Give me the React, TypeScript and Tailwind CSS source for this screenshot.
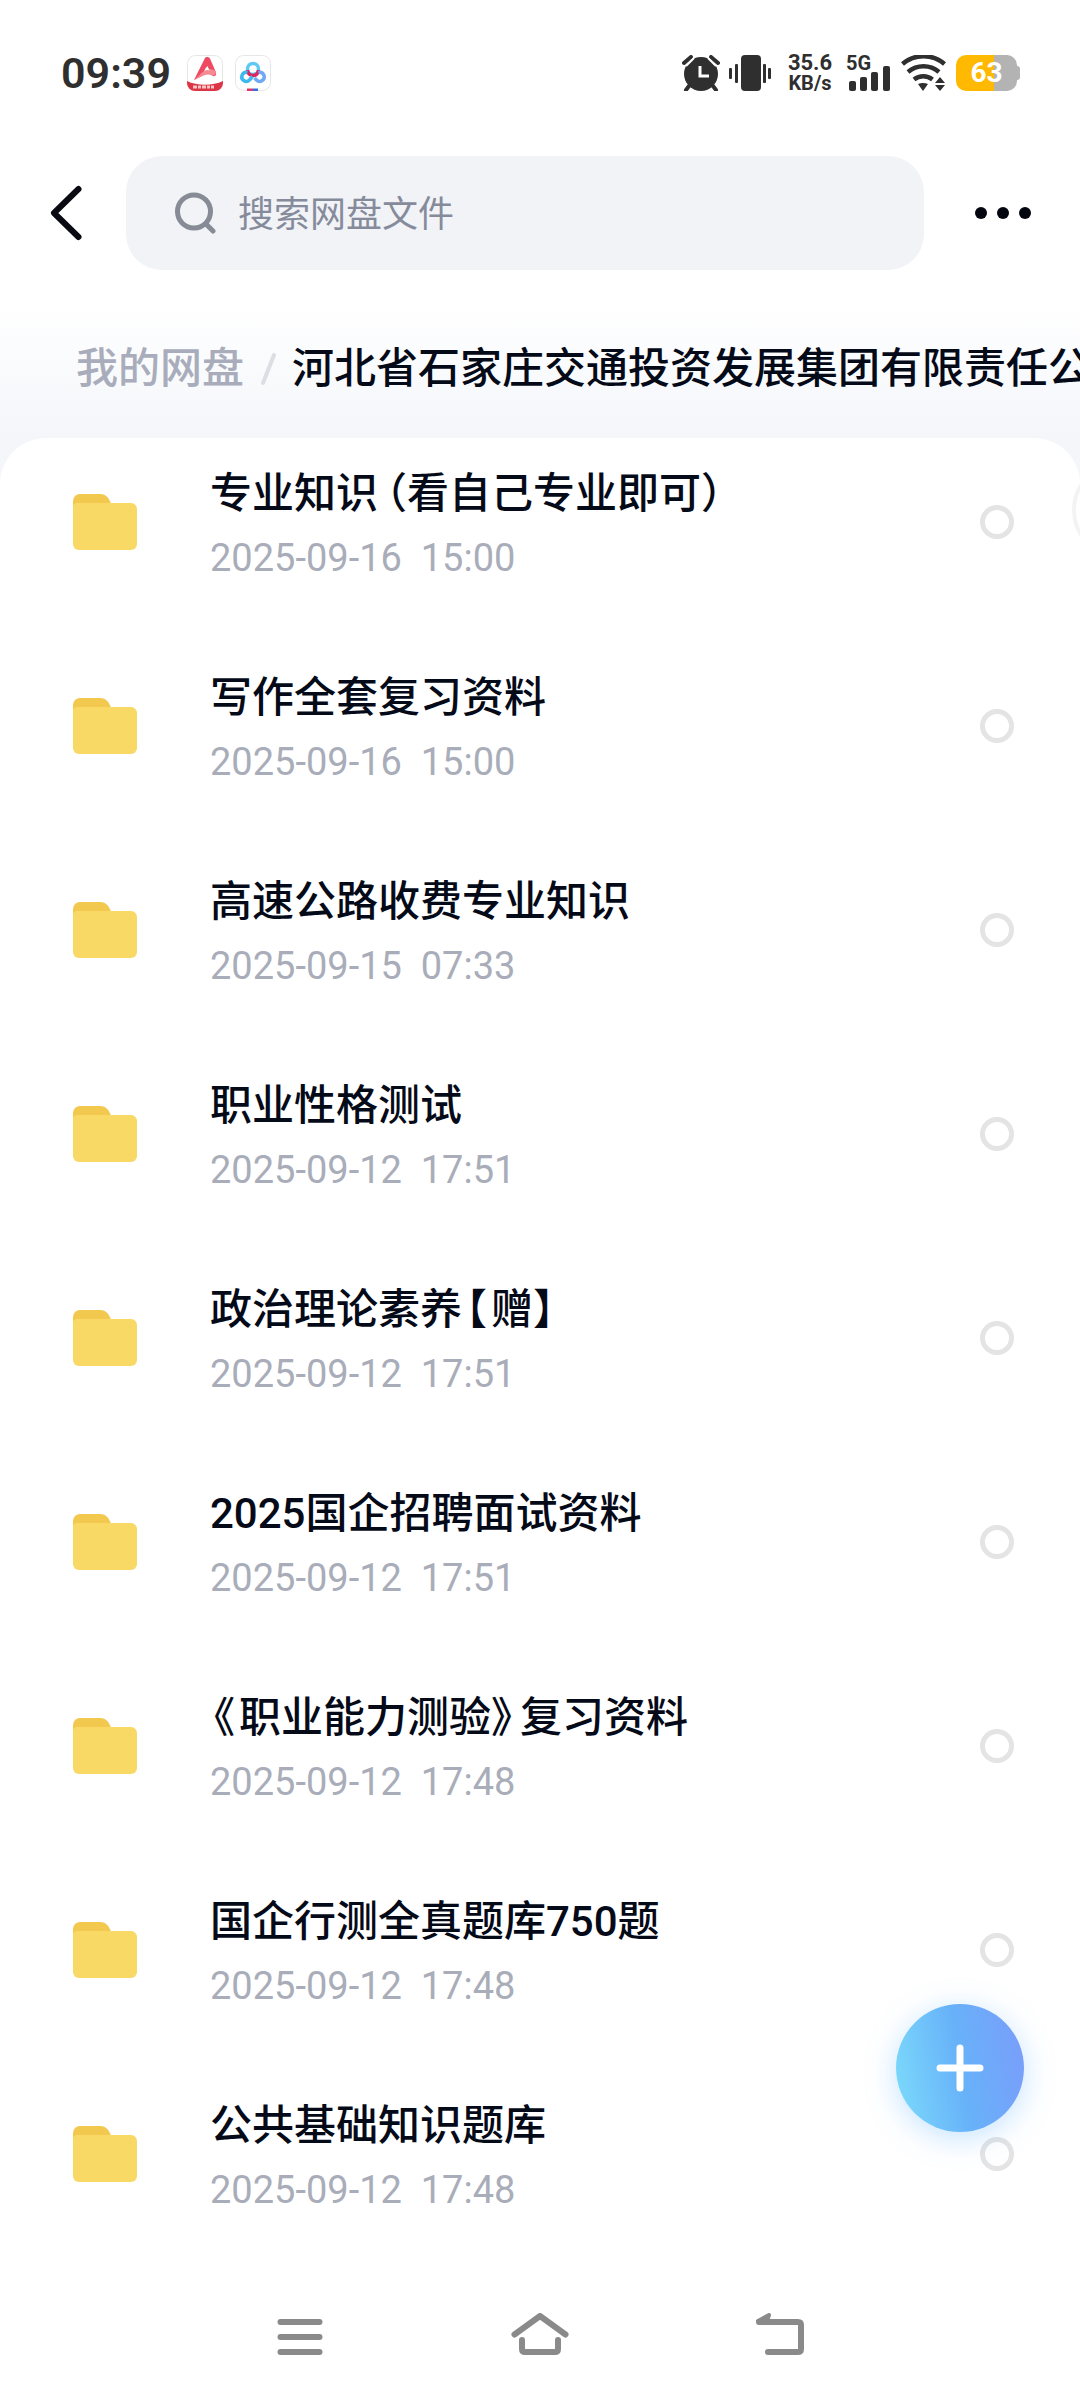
import { useState } from "react";

type Folder = { name: string; date: string; time: string };

const folders: Folder[] = [
  { name: "专业知识（看自己专业即可）", date: "2025-09-16", time: "15:00" },
  { name: "写作全套复习资料", date: "2025-09-16", time: "15:00" },
  { name: "高速公路收费专业知识", date: "2025-09-15", time: "07:33" },
  { name: "职业性格测试", date: "2025-09-12", time: "17:51" },
  { name: "政治理论素养【赠】", date: "2025-09-12", time: "17:51" },
  { name: "2025国企招聘面试资料", date: "2025-09-12", time: "17:51" },
  { name: "《职业能力测验》复习资料", date: "2025-09-12", time: "17:48" },
  { name: "国企行测全真题库750题", date: "2025-09-12", time: "17:48" },
  { name: "公共基础知识题库", date: "2025-09-12", time: "17:48" },
];

// Full-width brackets are set half-width, with a little padding back around them.
const BRACKET_SPACING: Record<string, string> = {
  "（": "pl-2",
  "）": "pr-2",
  "【": "px-1",
  "】": "pr-2",
  "《": "px-1",
  "》": "pr-2",
};

function StatusBar() {
  return (
    <div className="flex h-[146px] items-center justify-between pr-[60px] pl-[61px] text-[#2f2f2f]">
      <div className="flex items-center gap-3">
        <span className="mr-1 text-[43px] leading-none font-semibold">09:39</span>
        <svg width="36" height="36" viewBox="0 0 36 36">
          <rect x="0.5" y="0.5" width="35" height="35" rx="8" fill="#fff" stroke="#e6e6e6" />
          <path d="M0 26c10 5 26 5 36 0v2a8 8 0 0 1-8 8H8a8 8 0 0 1-8-8z" fill="#dc3545" />
          <path d="M7 25 18 3c1-1.500 4-1.500 5 .5l6 14c1 3-2 5-4 3l-3-3z" fill="#ee4b63" />
          <path d="m7 25 11-10c3-2 9-1 11 2 0 3-3 5-5 3-5-2-10 2-17 5z" fill="#f58a92" />
          <path d="M18 14 20.500 11l2 4.500q-2.500-1-5 .5z" fill="#fff" />
          <path d="M6 32h4m1 0h3m1 0h4m1 0h3m1 0h3" stroke="#f8c4c4" strokeWidth="3" />
        </svg>
        <svg width="36" height="36" viewBox="0 0 36 36" fill="none">
          <rect x="0.5" y="0.5" width="35" height="35" rx="8" fill="#fff" stroke="#e6e6e6" />
          <circle cx="18" cy="14" r="5.500" stroke="#5fc9f3" strokeWidth="3.500" />
          <path d="M12.500 15a5.500 5.500 0 0 0 11 0" stroke="#e0245e" strokeWidth="3.500" />
          <path d="M12.500 17.500a4.500 4.500 0 1 0 2 7.500l3-3.500" stroke="#3fb9ee" strokeWidth="3.500" />
          <path d="M23.500 17.500a4.500 4.500 0 1 1-2 7.500l-2-2" stroke="#6fa8f5" strokeWidth="3.500" />
          <path d="M12 35h6" stroke="#e0346b" strokeWidth="3" />
          <path d="M18 35h5" stroke="#2f6fe0" strokeWidth="3" />
        </svg>
      </div>

      <div className="flex items-center">
        <svg width="38" height="36" viewBox="0 0 38 36" fill="none" stroke="currentColor">
          <circle cx="19" cy="19" r="17" fill="currentColor" stroke="none" />
          <path d="m2 8 7-6m20 0 7 6M7 31l-3 4m27-4 3 4" strokeWidth="4" strokeLinecap="round" />
          <path d="m4 11 8-8m14 0 8 8" stroke="#fff" strokeWidth="2" />
          <path d="M18 11v10h9" stroke="#fff" strokeWidth="3" />
        </svg>
        <svg className="ml-[9px]" width="43" height="36" viewBox="0 0 43 36" fill="currentColor">
          <rect x="12" width="20" height="36" rx="4" />
          <rect x="0" y="13" width="3" height="11" rx="1" />
          <rect x="6" y="9" width="3" height="19" rx="1" />
          <rect x="34" y="9" width="3" height="19" rx="1" />
          <rect x="39" y="13" width="3" height="11" rx="1" />
        </svg>
        <div className="ml-[14px] w-[48px] text-center text-[22px] leading-[20px] font-bold">
          <div>35.6</div>
          <div className="text-[20px]">KB/s</div>
        </div>
        <div className="relative ml-[12px]">
          <svg width="44" height="36" viewBox="0 0 44 36" fill="currentColor">
            <rect x="3" y="26" width="7" height="10" rx="2" />
            <rect x="14" y="22" width="7" height="14" rx="2" />
            <rect x="25" y="17" width="7" height="19" rx="2" />
            <rect x="37" y="11" width="7" height="25" rx="2" />
          </svg>
          <span className="absolute top-0 left-0 text-[20px] leading-[16px] font-bold">5G</span>
        </div>
        <svg className="ml-[11px]" width="45" height="36" viewBox="0 0 45 36" fill="none" stroke="currentColor" strokeWidth="4.500">
          <path d="M1.500 9a32 32 0 0 1 42 0M7 17a24 24 0 0 1 31 0M13 24.500a15 15 0 0 1 18.500 0" />
          <path d="M17 29c3-1.500 7-1.500 10 0l-5 7zM39 22l5 6H34zM34 30h10l-5 6z" fill="currentColor" stroke="none" />
        </svg>
        <div className="ml-[10px] flex items-center">
          <div className="flex h-9 w-[61px] items-center justify-center rounded-[10px] bg-linear-to-r from-[#ffb900] from-62% to-[#b3b3b3] to-62% text-[28px] leading-none font-bold text-white">
            63
          </div>
          <div className="h-[14px] w-[3px] rounded-r-[3px] bg-[#b3b3b3]" />
        </div>
      </div>
    </div>
  );
}

function SearchHeader() {
  return (
    <header className="flex items-center py-[10px] pr-[48px] pl-[48px]">
      <button type="button" aria-label="返回" className="mr-[42px]">
        <svg width="36" height="60" viewBox="0 0 36 60" fill="none" stroke="#0a0b12" strokeWidth="6" strokeLinecap="round" strokeLinejoin="round">
          <path d="M30.500 6 6 30l24.500 24" />
        </svg>
      </button>
      <label className="flex h-[114px] flex-1 items-center rounded-[36px] bg-[#f1f3f7] px-[48px]">
        <svg className="shrink-0" width="42" height="42" viewBox="0 0 42 42" fill="none" stroke="#868b95" strokeWidth="5" strokeLinecap="round">
          <circle cx="20" cy="19.500" r="16.500" />
          <path d="m32 32 7 7" />
        </svg>
        <input
          type="search"
          aria-label="搜索网盘文件"
          placeholder="搜索网盘文件"
          className="ml-[22px] w-full min-w-0 bg-transparent pt-1 text-[36px] leading-[54px] outline-none placeholder:text-[#868b9b]"
        />
      </label>
      <button type="button" aria-label="更多" className="ml-[50px] flex gap-[10px] px-[1px]">
        <span className="size-3 rounded-full bg-[#04060f]" />
        <span className="size-3 rounded-full bg-[#04060f]" />
        <span className="size-3 rounded-full bg-[#04060f]" />
      </button>
    </header>
  );
}

function Breadcrumb() {
  return (
    <nav
      aria-label="路径"
      className="flex h-[158px] items-center overflow-hidden bg-linear-to-b from-white from-15% to-[#f4f6fa] pt-5 pl-[76px] text-[42px] leading-[60px] font-medium whitespace-nowrap"
    >
      <a href="#root" className="text-[#a9adbb]">
        我的网盘
      </a>
      <svg className="mx-[16px] shrink-0" width="16" height="32" viewBox="0 0 16 32" stroke="#dcdee3" strokeWidth="4" strokeLinecap="round">
        <path d="M14 2 3 30" />
      </svg>
      <a href="#current" aria-current="page" className="text-[#050a18]">
        河北省石家庄交通投资发展集团有限责任公司
      </a>
    </nav>
  );
}

function FolderName({ name }: { name: string }) {
  return name.split(/([（）【】《》])/).map((part, i) =>
    BRACKET_SPACING[part] ? (
      <span key={i} className={`${BRACKET_SPACING[part]} [font-feature-settings:'halt']`}>
        {part}
      </span>
    ) : (
      part
    ),
  );
}

function FolderIcon() {
  return (
    <svg className="shrink-0" width="64" height="56" viewBox="0 0 64 56">
      <path d="M0 7a7 7 0 0 1 7-7h20c5 0 9 3 11 10v8H0z" fill="#f3c84f" />
      <path d="M0 13q0-4 4-4h54a6 6 0 0 1 6 6v35a6 6 0 0 1-6 6H6a6 6 0 0 1-6-6z" fill="#f8d966" />
    </svg>
  );
}

export default function App() {
  const [selected, setSelected] = useState<string[]>([]);

  function toggle(name: string) {
    setSelected((prev) =>
      prev.includes(name) ? prev.filter((n) => n !== name) : [...prev, name],
    );
  }

  return (
    <div className="relative flex min-h-screen flex-col overflow-hidden bg-white font-[Roboto,'Noto_Sans_CJK_SC',sans-serif]">
      <StatusBar />
      <SearchHeader />
      <Breadcrumb />

      <main className="relative flex-1 bg-[#f4f6fa]">
        <ul className="flex h-full flex-col gap-[84px] rounded-t-[46px] bg-white pt-6 pr-[66px] pb-[60px] pl-[73px]">
          {folders.map((f) => (
            <li key={f.name}>
              <label className="flex items-center">
                <FolderIcon />
                <div className="ml-[73px] min-w-0 flex-1">
                  <div className="text-[42px] leading-[64px] font-medium text-[#050a18]">
                    <FolderName name={f.name} />
                  </div>
                  <div className="mt-2 text-[38px] leading-[48px] whitespace-pre text-[#a9adb9]">
                    {f.date}  {f.time}
                  </div>
                </div>
                <input
                  type="checkbox"
                  checked={selected.includes(f.name)}
                  onChange={() => toggle(f.name)}
                  className="size-[34px] shrink-0 appearance-none rounded-full border-[5px] border-[#e4e4e4] checked:border-[#4e8cff] checked:bg-[#4e8cff]"
                />
              </label>
            </li>
          ))}
        </ul>
        {/* floating handle, mostly off the right edge */}
        <div className="absolute top-[24px] -right-[88px] size-24 rounded-full border-4 border-[#f3f3f4] bg-white" />
      </main>

      <button
        type="button"
        aria-label="新建"
        className="absolute right-[56px] bottom-[268px] flex size-32 items-center justify-center rounded-full bg-linear-[80deg] from-[#7ddcfb] via-[#67b2f9] to-[#7b9cfb] shadow-[0_6px_30px_rgba(90,175,255,0.35)]"
      >
        <svg width="48" height="48" viewBox="0 0 48 48" stroke="#fff" strokeWidth="7" strokeLinecap="round">
          <path d="M24 4v40M4 24h40" />
        </svg>
      </button>

      <nav
        aria-label="系统导航"
        className="grid h-[126px] grid-cols-3 place-items-center bg-white px-[16.67%] text-[#8a8a8a]"
      >
        <button type="button" aria-label="最近任务">
          <svg width="60" height="48" viewBox="0 0 60 48" fill="none" stroke="currentColor" strokeWidth="6" strokeLinecap="round">
            <path d="M10.500 9h39M10.500 24h39M10.500 39h39" />
          </svg>
        </button>
        <button type="button" aria-label="主屏幕">
          <svg width="60" height="48" viewBox="0 0 60 48" fill="none" stroke="currentColor" strokeWidth="6" strokeLinecap="round" strokeLinejoin="round">
            <path d="M4.500 21.500 30 3l25.500 18.500" />
            <path d="M12 27v9q0 3 3 3h30q3 0 3-3v-9" />
          </svg>
        </button>
        <button type="button" aria-label="返回上一级">
          <svg width="60" height="48" viewBox="0 0 60 48" fill="none" stroke="currentColor" strokeWidth="6" strokeLinecap="round" strokeLinejoin="round">
            <path d="M9 9h39q3 0 3 3v24q0 3-3 3H18" />
            <path d="m8 8 11-6-2 6z" fill="currentColor" strokeWidth="4" />
          </svg>
        </button>
      </nav>
    </div>
  );
}
